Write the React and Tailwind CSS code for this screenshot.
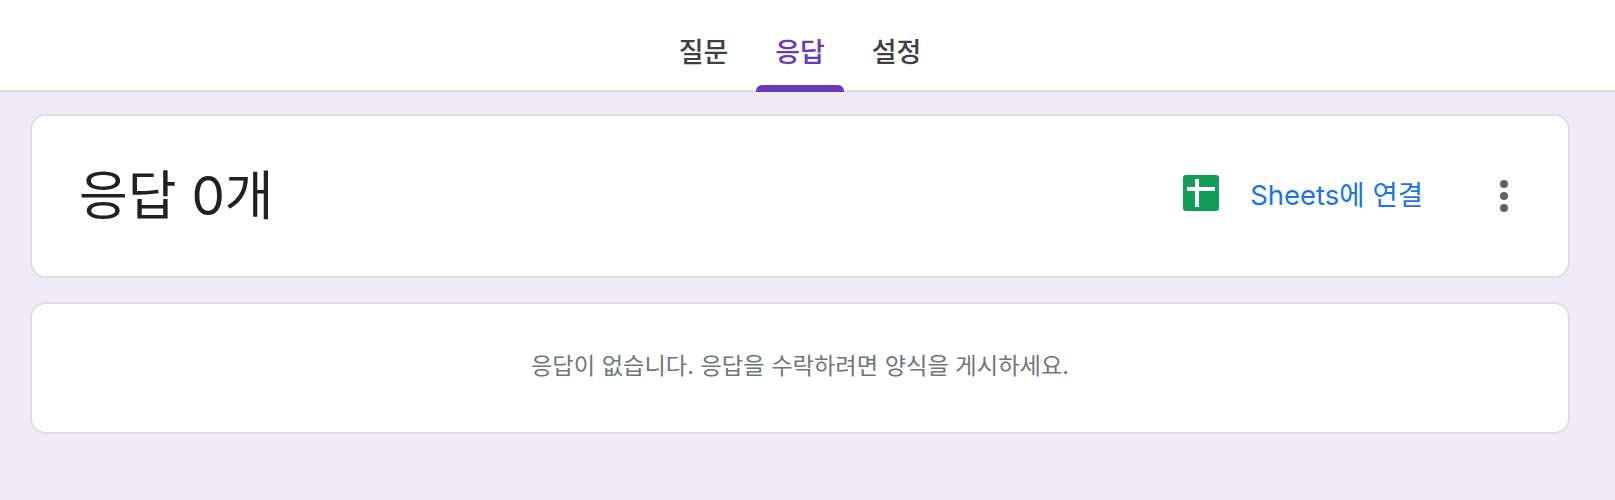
const ko = 'font-["Inter","Noto_Sans_CJK_KR",sans-serif]';

function Tab({ label, active }) {
  return (
    <div className="relative flex h-full w-[96.5px] items-center justify-center pt-[1px]">
      <span className={`text-[27px] font-medium leading-none ${active ? "text-[#673ab7]" : "text-[#3c4043]"}`}>{label}</span>
      {active && <div className="absolute bottom-[-2px] left-[4px] h-[7px] w-[88px] rounded-t-[6px] bg-[#673ab7]" />}
    </div>
  );
}

export default function App() {
  return (
    <div className={`flex h-[500px] w-full flex-col bg-[#efeaf8] pr-[15px] ${ko}`}>
      <header className="-mr-[15px] flex h-[92px] shrink-0 items-stretch justify-center border-b-2 border-[#dddcdf] bg-white pr-[15px] pt-[14px]">
        <Tab label="질문" />
        <Tab label="응답" active />
        <Tab label="설정" />
      </header>
      <main className="flex flex-col gap-[24px] px-[30px] pt-[22px]">
        <section className="flex h-[164px] items-center justify-between rounded-[16px] border-2 border-[#dddcdf] bg-white pb-[2px] pl-[47px] pr-[60px]">
          <h1 className="mt-[3px] text-[53px] font-normal leading-none text-[#202124]">응답 0개</h1>
          <div className="flex items-center">
            <svg className="mb-[4px]" width="36" height="36" viewBox="0 0 36 36" aria-hidden="true">
              <rect width="36" height="36" rx="3" fill="#0f9d58" />
              <rect x="4" y="12" width="28" height="4" fill="#fff" />
              <rect x="12" y="4" width="4" height="28" fill="#fff" />
            </svg>
            <span className="ml-[31px] mt-[1px] text-[27.5px] font-normal leading-none text-[#1a73e8]">Sheets에 연결</span>
            <div className="ml-[77px] mt-[2px] flex flex-col gap-[4px]">
              <span className="h-[8px] w-[8px] rounded-full bg-[#5f6368]" />
              <span className="h-[8px] w-[8px] rounded-full bg-[#5f6368]" />
              <span className="h-[8px] w-[8px] rounded-full bg-[#5f6368]" />
            </div>
          </div>
        </section>
        <section className="flex h-[132px] items-center justify-center rounded-[16px] border-2 border-[#dddcdf] bg-white">
          <p className="mb-[4px] text-[23.25px] leading-none text-[#70757a]">응답이 없습니다. 응답을 수락하려면 양식을 게시하세요.</p>
        </section>
      </main>
    </div>
  );
}
